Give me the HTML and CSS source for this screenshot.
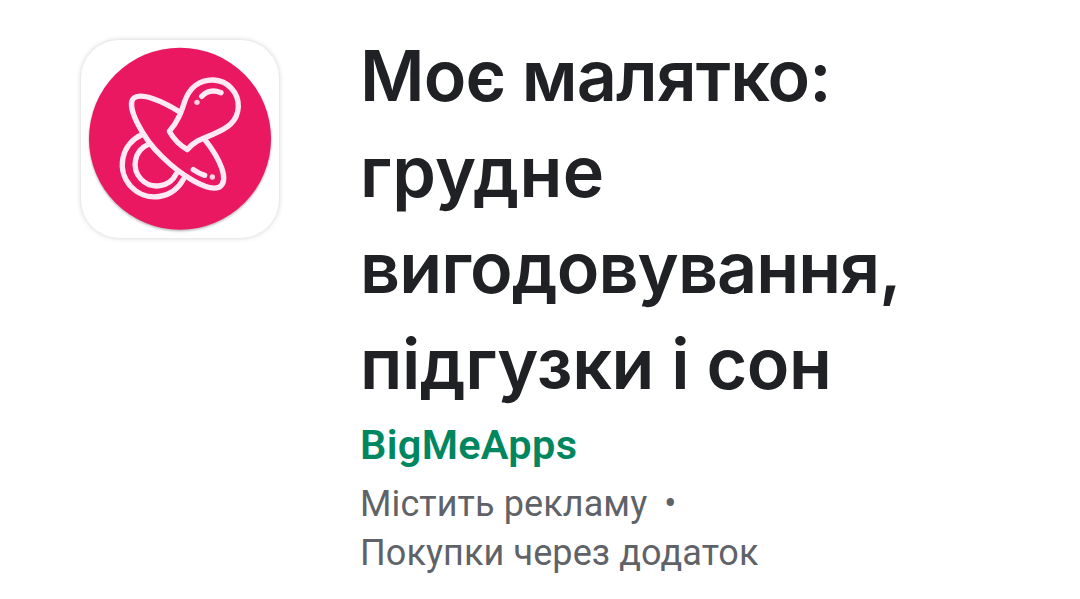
FILE: index.html
```html
<!DOCTYPE html>
<html lang="uk">
<head>
    <meta charset="UTF-8">
    <meta name="viewport" content="width=device-width, initial-scale=1.0">
    <title>Моє малятко</title>
    <link rel="stylesheet" href="styles.css">
</head>
<body>

    <header class="app-header">
        <!-- App icon -->
        <div class="app-icon">
            <svg viewBox="33 30 594 594" aria-hidden="true">
                <circle class="icon-circle" cx="330" cy="326" r="273"/>
                <g class="icon-lines">
                    <path d="M214 315A97 97 0 1 0 340 448"/>
                    <path d="M235 343A65 65 0 1 0 319 431"/>
                    <path d="M328 245C275 212 216 188 193 203C163 225 220 327 276 380C332 435 412 486 447 472C481 452 448 383 404 328"/>
                    <path d="M298 304C324 275 334 246 344 214C358 174 387 149 430 150C474 152 506 188 505 230C503 277 470 296 426 314C390 328 372 335 352 359Q317 339 298 304Z"/>
                    <path d="M395 199Q419 174 453 188"/>
                    <path d="M370 419Q385 430 404 436"/>
                </g>
                <circle class="icon-dot" cx="381" cy="217" r="8"/>
                <circle class="icon-dot" cx="427" cy="441" r="8"/>
            </svg>
        </div>

        <!-- App name, developer and notes -->
        <div class="app-info">
            <h1 class="app-title">
                <span class="line-one">Моє малятко:</span>
                <span class="line-two">грудне</span>
                <span class="line-three">вигодовування,</span>
                <span class="line-four">підгузки і сон</span>
            </h1>
            <div class="developer">BigMeApps</div>
            <div class="notes">
                <div class="note">Містить рекламу<span class="dot">•</span></div>
                <div class="note">Покупки через додаток</div>
            </div>
        </div>
    </header>

</body>
</html>
```
FILE: styles.css
```css
body {
    margin: 0;
    background-color: #fff;
    font-family: Roboto, "Noto Sans", sans-serif;
}
.app-header {
    display: flex;
    align-items: flex-start;
    gap: 81px;
    padding: 28px 0 0 81px;
}
.app-icon {
    flex: none;
    width: 198px;
    height: 198px;
    margin-top: 12px;
    border-radius: 38px;
    background-color: #fff;
    box-shadow: 0 0 5px rgba(60, 64, 67, 0.25);
}
.app-icon svg {
    display: block;
    width: 100%;
    height: 100%;
}
.icon-circle {
    fill: #e91860;
    filter: drop-shadow(0 4px 3px rgba(0, 0, 0, 0.3));
}
.icon-lines {
    fill: none;
    stroke: #ffe9f4;
    stroke-width: 16;
    stroke-linecap: round;
    stroke-linejoin: round;
}
.icon-dot {
    fill: #ffd3e6;
}
.app-title {
    margin: 0;
    color: #202124;
    font-family: Inter, "Open Sans", sans-serif;
    font-size: 70px;
    font-weight: 560;
    line-height: 96px;
    letter-spacing: -0.9px;
    white-space: nowrap;
}
.app-title span {
    display: block;
}
.app-title .line-two {
    letter-spacing: 0.3px;
}
.app-title .line-four {
    letter-spacing: -0.4px;
}
.developer {
    margin-top: 8px;
    color: #01875f;
    font-size: 41.5px;
    font-weight: 600;
    line-height: 50px;
    letter-spacing: 0.3px;
}
.notes {
    margin-top: 10px;
    color: #5f6368;
    font-size: 36px;
    line-height: 49px;
    letter-spacing: 0.1px;
    white-space: nowrap;
}
.dot {
    margin-left: 17px;
}
```
